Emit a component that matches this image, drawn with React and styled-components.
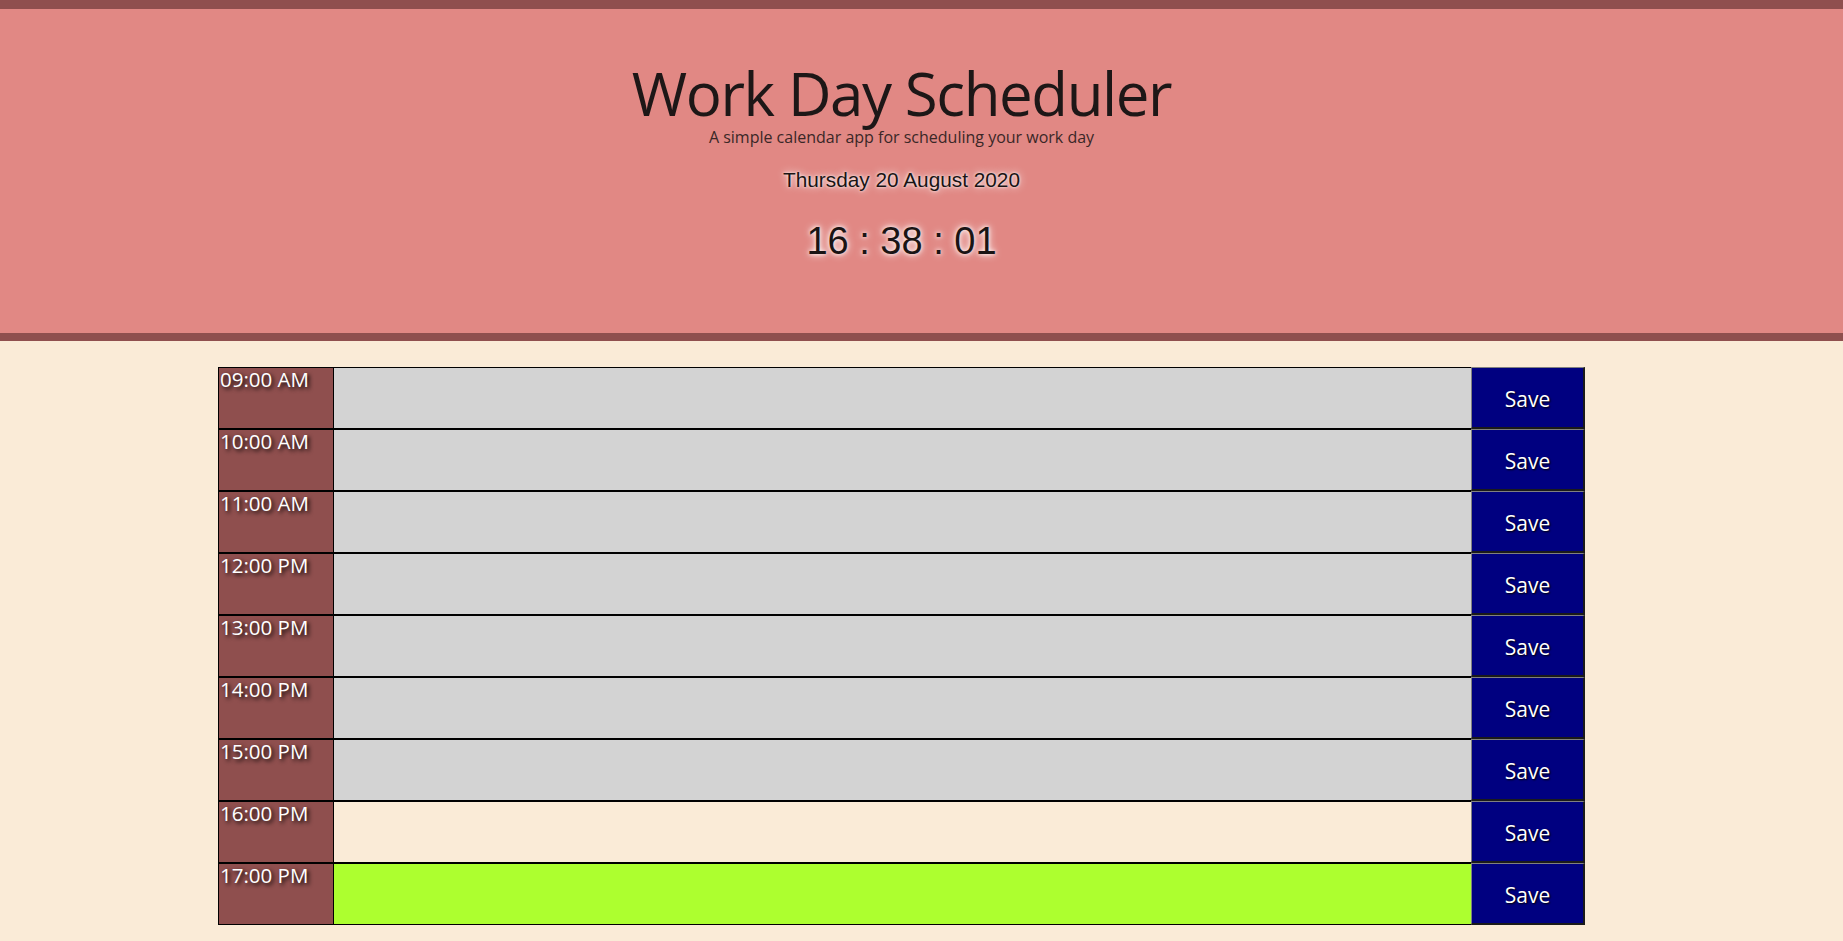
import React from 'react';
import styled, { createGlobalStyle } from 'styled-components';

const GlobalStyle = createGlobalStyle`
  html, body {
    margin: 0;
    padding: 0;
    background: #faebd7;
    font-family: "Open Sans", "Liberation Sans", sans-serif;
  }
  * { box-sizing: border-box; }
`;

const hours = [
  { label: '09:00 AM', state: 'past' },
  { label: '10:00 AM', state: 'past' },
  { label: '11:00 AM', state: 'past' },
  { label: '12:00 PM', state: 'past' },
  { label: '13:00 PM', state: 'past' },
  { label: '14:00 PM', state: 'past' },
  { label: '15:00 PM', state: 'past' },
  { label: '16:00 PM', state: 'present' },
  { label: '17:00 PM', state: 'future' },
];

const stateColors = {
  past: '#d3d3d3',
  present: '#faebd7',
  future: '#adff2f',
};

const App = () => {
  return (
    <Page>
      <GlobalStyle />
      <Header>
        <HeaderInner>
          <Title>Work Day Scheduler</Title>
          <Lead>A simple calendar app for scheduling your work day</Lead>
          <DateLine>Thursday 20 August 2020</DateLine>
          <Clock>16 : 38 : 01</Clock>
        </HeaderInner>
      </Header>
      <Main>
        <Schedule>
          {hours.map((h) => (
            <Row key={h.label}>
              <Hour>{h.label}</Hour>
              <Entry state={h.state} />
              <SaveBtn>Save</SaveBtn>
            </Row>
          ))}
        </Schedule>
      </Main>
    </Page>
  );
};

export default App;

const Page = styled.div`
  min-height: 941px;
`;

const Header = styled.header`
  background: #e18884;
  border-top: 9px solid #8f4f4e;
  border-bottom: 8px solid #8f4f4e;
  padding: 54px 0 63px;
`;

const HeaderInner = styled.div`
  margin-right: 40px;
  text-align: center;
`;

const Title = styled.h1`
  margin: 0;
  font-family: "Open Sans", sans-serif;
  font-weight: 400;
  font-size: 60px;
  letter-spacing: -1.4px;
  line-height: 1;
  color: #1d1717;
`;

const Lead = styled.p`
  margin: 2px 0 0;
  font-size: 16px;
  line-height: 1.5;
  color: #3a2727;
`;

const DateLine = styled.p`
  margin: 15px 0 0;
  font-family: "Liberation Sans", Arial, sans-serif;
  font-size: 20.8px;
  line-height: 1.5;
  color: #1a1414;
  text-shadow: 0 0 8px #fff, 0 0 3px #fff;
`;

const Clock = styled.p`
  margin: 18px 0 0;
  font-family: "Liberation Sans", Arial, sans-serif;
  font-size: 38px;
  line-height: 1.5;
  color: #1a1414;
  text-shadow: 0 0 9px #fff, 0 0 4px #fff;
`;

const Main = styled.main`
  padding: 26px 40px 0 0;
`;

const Schedule = styled.div`
  width: 1367px;
  margin: 0 auto;
`;

const Row = styled.div`
  display: flex;
  height: 62px;
`;

const Hour = styled.div`
  width: 116px;
  flex-shrink: 0;
  background: #8f4f4e;
  border: 1px solid #000;
  color: #fff;
  font-size: 20.5px;
  line-height: 1.1;
  padding-left: 1px;
  text-shadow: 2px 2px 4px #000;
`;

const Entry = styled.textarea`
  flex: 1;
  height: 100%;
  margin: 0;
  resize: none;
  border: none;
  border-top: 1px solid #000;
  border-bottom: 1px solid #000;
  background: ${(p) => stateColors[p.state]};
  outline: none;
`;

const SaveBtn = styled.button`
  width: 114px;
  flex-shrink: 0;
  height: 100%;
  margin: 0;
  padding: 3px 0 0;
  background: #000080;
  color: #fff;
  font-family: "Open Sans", sans-serif;
  font-size: 21px;
  border-top: 1px solid #808080;
  border-left: 1px solid #808080;
  border-right: 2px solid #1a1a1a;
  border-bottom: 2px solid #1a1a1a;
  text-shadow: 1px 1px 2px #000;
  cursor: pointer;
`;
